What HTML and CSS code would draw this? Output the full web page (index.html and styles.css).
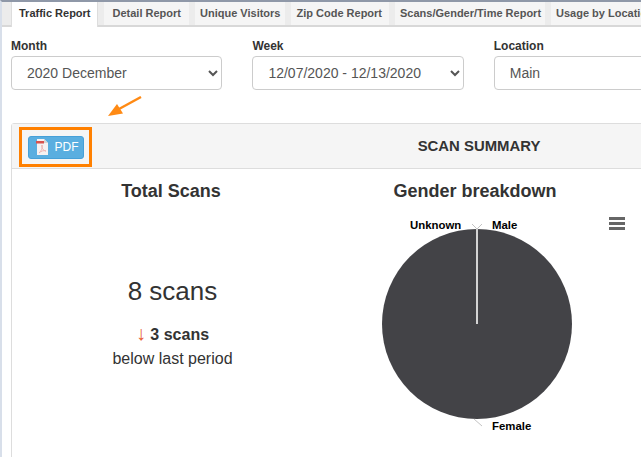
FILE: index.html
```html
<!DOCTYPE html>
<html lang="en">
<head>
<meta charset="utf-8">
<title>Traffic Report</title>
<link rel="stylesheet" href="styles.css">
</head>
<body>
<div class="page">
  <nav class="tabs">
    <a class="tab active">Traffic Report</a>
    <a class="tab detail">Detail Report</a>
    <a class="tab unique">Unique Visitors</a>
    <a class="tab zip">Zip Code Report</a>
    <a class="tab scans">Scans/Gender/Time Report</a>
    <a class="tab">Usage by Location</a>
  </nav>
  <form class="filters">
    <label class="field"><span class="field-label">Month</span>
      <select class="field-select"><option>2020 December</option></select></label>
    <label class="field"><span class="field-label">Week</span>
      <select class="field-select"><option>12/07/2020 - 12/13/2020</option></select></label>
    <label class="field"><span class="field-label">Location</span>
      <select class="field-select"><option>Main</option></select></label>
  </form>
  <svg class="arrow" width="38" height="24" viewBox="0 0 38 24"><path d="M34 1 L12 13" stroke="#ff8a14" stroke-width="2.4" fill="none"/><path d="M1 20 L16 17.500 L10 8 Z" fill="#ff8a14"/></svg>
  <section class="panel">
    <header class="panel-head">
      <span class="pdf-highlight">
        <button class="pdf-btn" type="button">
          <svg class="pdf-icon" width="12" height="16" viewBox="0 0 12 16"><path d="M1 0H8L12 4V16H1Z" fill="#f6f2f2"/><path d="M8 0L12 4H8Z" fill="#d5d5d5"/><rect x="0" y="2" width="8" height="2.500" fill="#d8534f"/><path d="M3 14C5 12 7 9 6 6C5 9 8 12 10 12C8 11 5 12 3 14Z" fill="none" stroke="#eeb4b2" stroke-width="1"/></svg>
          PDF
        </button>
      </span>
      <h2 class="panel-title">SCAN SUMMARY</h2>
    </header>
    <div class="panel-body">
      <div class="summary">
        <h3 class="col-title">Total Scans</h3>
        <div class="summary-text">
          <p class="scan-count">8 scans</p>
          <p class="delta"><span class="delta-arrow">↓</span> <b>3 scans</b></p>
          <p class="delta-note">below last period</p>
        </div>
      </div>
      <div class="gender">
        <h3 class="col-title">Gender breakdown</h3>
        <div class="chart">
          <svg class="pie" width="304" height="250" viewBox="0 0 304 250">
            <circle cx="155" cy="137" r="95" fill="#434347"/>
            <path d="M155 42V137" stroke="#d4d4d4" stroke-width="2"/>
            <path d="M150 37L155 42L160 37" stroke="#c4c4c4" fill="none"/>
            <path d="M152 232L160 239" stroke="#c4c4c4" fill="none"/>
            <text class="pie-label" x="88" y="42">Unknown</text>
            <text class="pie-label" x="170" y="42">Male</text>
            <text class="pie-label" x="170" y="243">Female</text>
          </svg>
          <svg class="menu" width="16" height="13" viewBox="0 0 16 13"><path d="M0 0h16v3h-16zM0 5h16v3h-16zM0 10h16v3h-16z" fill="#666"/></svg>
        </div>
      </div>
    </div>
  </section>
</div>
</body>
</html>
```
FILE: styles.css
```css
html, body { margin: 0; padding: 0; height: 100%; overflow: hidden; background: #fff; }
body { font-family: "Liberation Sans", Arial, sans-serif; color: #333; }
.page { position: relative; width: 1000px; height: 457px; box-sizing: border-box; border-top: 2px solid #8f98a8; border-left: 2px solid #d8dfea; }
.tabs { display: flex; height: 25px; box-sizing: border-box; padding-left: 9px; gap: 6px; background: #ececec; border-bottom: 2px solid #d8d8d8; }
.tab { padding: 0 5px; font-size: 11px; font-weight: 700; line-height: 23px; color: #555; background: #f5f5f5; }
.tab.detail { padding: 0 8px 0 9px; }
.tab.unique { padding: 0 5px; }
.tab.zip { padding: 0 7px 0 5px; }
.tab.scans { padding: 0 4px 0 5px; }
.tab.active { height: 25px; padding: 0 6px 0 7px; box-sizing: border-box; color: #333; background: #fff; border-right: 1px solid #ddd; border-left: 1px solid #ddd; }
.filters { display: flex; gap: 30px; padding: 10px 0 0 9px; }
.field { display: flex; flex-direction: column; width: 211.4px; }
.field-label { font-size: 12px; font-weight: 700; line-height: 19px; color: #333; }
.field-select { height: 34px; padding: 0 11px; font: 14px "Liberation Sans", Arial, sans-serif; color: #555; background-color: #fff; border: 1px solid #ccc; border-radius: 4px; }
.arrow { position: absolute; left: 105px; top: 94px; }
.panel { position: absolute; left: 9px; top: 121px; width: 936px; height: 340px; box-sizing: border-box; border: 1px solid #ddd; border-radius: 3px 3px 0 0; }
.panel-head { position: relative; display: flex; align-items: center; justify-content: center; height: 44px; background: #f5f5f5; border-bottom: 1px solid #ddd; }
.panel-title { margin: 0; font-size: 14.900px; font-weight: 700; color: #333; }
.pdf-highlight { position: absolute; left: 7px; top: 3px; display: flex; align-items: center; justify-content: center; width: 73px; height: 40px; box-sizing: border-box; border: 3.500px solid #ff8000; }
.pdf-btn { display: flex; align-items: center; gap: 7px; width: 56px; height: 23px; padding: 0 0 0 7px; font: 12px "Liberation Sans", Arial, sans-serif; color: #fff; background: #5aaee0; border: 1px solid #46a0d8; border-radius: 3px; }
.panel-body { display: flex; padding: 0 7px; }
.summary, .gender { width: 304px; text-align: center; }
.summary-text { padding-left: 3px; }
.col-title { margin: 12px 0 0; font-size: 18px; font-weight: 700; line-height: 20px; color: #333; }
.scan-count { margin: 75px 0 0; font-size: 26px; line-height: 30px; color: #333; }
.delta { margin: 17px 0 0; font-size: 16px; line-height: 20px; }
.delta-arrow { font-size: 20px; line-height: 20px; color: #e8623a; }
.delta-note { margin: 4px 0 0; font-size: 16px; line-height: 20px; }
.chart { position: relative; }
.pie { display: block; margin: -14px 0 0 -1px; }
.pie-label { font: 700 11.400px "Liberation Sans", Arial, sans-serif; fill: #000; }
.menu { position: absolute; left: 286px; top: 30px; }
```
